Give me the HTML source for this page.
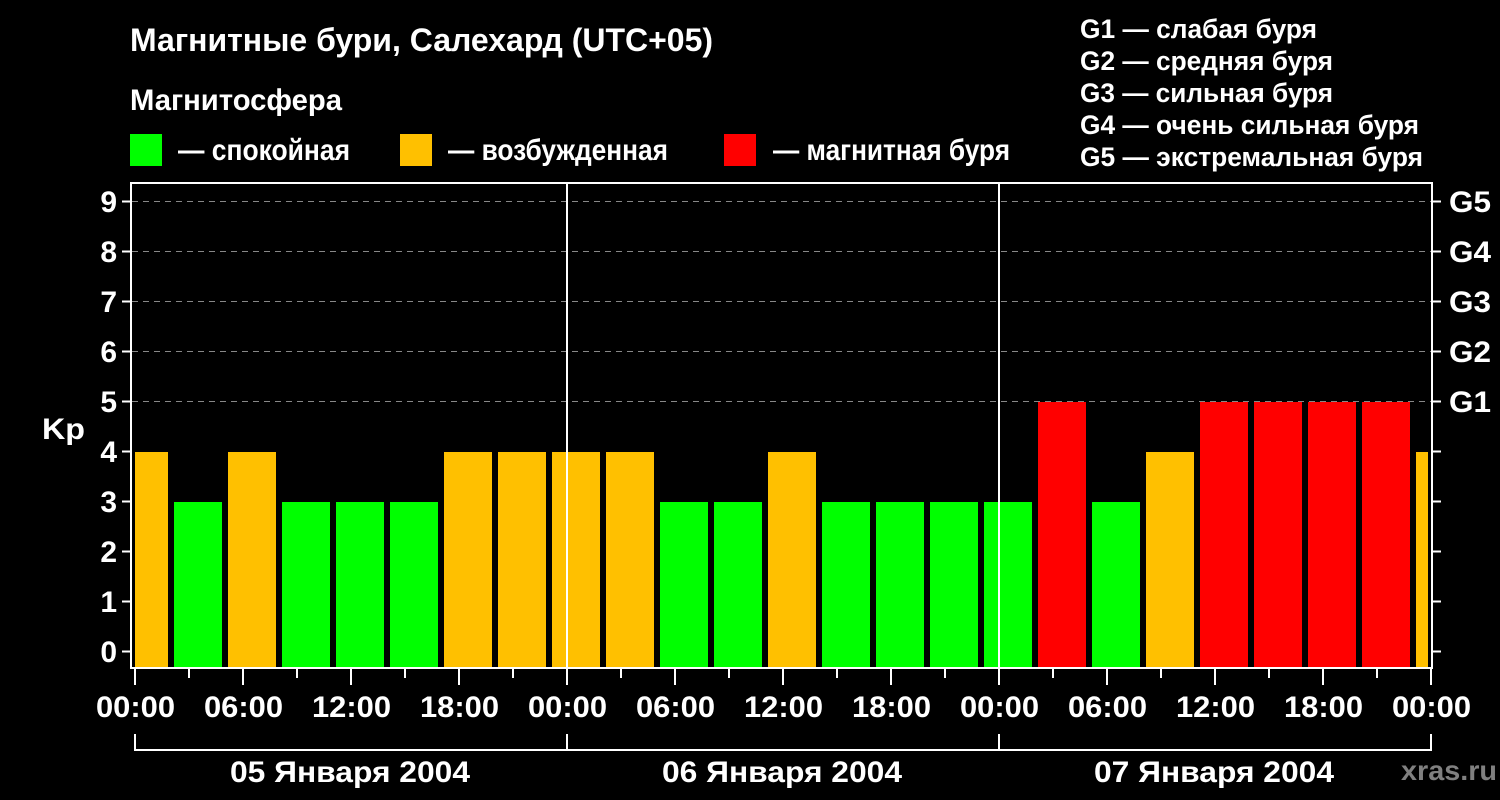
<!DOCTYPE html>
<html><head><meta charset="utf-8"><style>html,body{margin:0;padding:0;background:#000;}svg{display:block}</style></head>
<body>
<svg width="1500" height="800" xmlns="http://www.w3.org/2000/svg" font-family="'Liberation Sans', sans-serif" font-weight="bold" fill="#fff">
<rect width="1500" height="800" fill="#000"/>
<text x="130" y="51" font-size="32" textLength="583" lengthAdjust="spacingAndGlyphs">Магнитные бури, Салехард (UTC+05)</text>
<text x="130" y="110" font-size="30" textLength="212" lengthAdjust="spacingAndGlyphs">Магнитосфера</text>
<rect x="130" y="134" width="32" height="32" fill="#00ff00"/>
<text x="178" y="160" font-size="30" textLength="172" lengthAdjust="spacingAndGlyphs">— спокойная</text>
<rect x="400" y="134" width="32" height="32" fill="#ffc000"/>
<text x="448" y="160" font-size="30" textLength="220" lengthAdjust="spacingAndGlyphs">— возбужденная</text>
<rect x="724" y="134" width="32" height="32" fill="#ff0000"/>
<text x="773" y="160" font-size="30" textLength="237" lengthAdjust="spacingAndGlyphs">— магнитная буря</text>
<g font-size="27">
<text x="1080" y="38" textLength="237" lengthAdjust="spacingAndGlyphs">G1 — слабая буря</text>
<text x="1080" y="70" textLength="253" lengthAdjust="spacingAndGlyphs">G2 — средняя буря</text>
<text x="1080" y="102" textLength="253" lengthAdjust="spacingAndGlyphs">G3 — сильная буря</text>
<text x="1080" y="134" textLength="339" lengthAdjust="spacingAndGlyphs">G4 — очень сильная буря</text>
<text x="1080" y="166" textLength="343" lengthAdjust="spacingAndGlyphs">G5 — экстремальная буря</text>
</g>
<g stroke="#888" stroke-width="1" stroke-dasharray="6,5">
<line x1="132" y1="201.5" x2="1431" y2="201.5"/><line x1="132" y1="251.5" x2="1431" y2="251.5"/>
<line x1="132" y1="301.5" x2="1431" y2="301.5"/><line x1="132" y1="351.5" x2="1431" y2="351.5"/>
<line x1="132" y1="401.5" x2="1431" y2="401.5"/>
</g>
<g>
<rect x="135" y="452" width="33" height="216" fill="#ffc000"/>
<rect x="174" y="502" width="48" height="166" fill="#00ff00"/>
<rect x="228" y="452" width="48" height="216" fill="#ffc000"/>
<rect x="282" y="502" width="48" height="166" fill="#00ff00"/>
<rect x="336" y="502" width="48" height="166" fill="#00ff00"/>
<rect x="390" y="502" width="48" height="166" fill="#00ff00"/>
<rect x="444" y="452" width="48" height="216" fill="#ffc000"/>
<rect x="498" y="452" width="48" height="216" fill="#ffc000"/>
<rect x="552" y="452" width="48" height="216" fill="#ffc000"/>
<rect x="606" y="452" width="48" height="216" fill="#ffc000"/>
<rect x="660" y="502" width="48" height="166" fill="#00ff00"/>
<rect x="714" y="502" width="48" height="166" fill="#00ff00"/>
<rect x="768" y="452" width="48" height="216" fill="#ffc000"/>
<rect x="822" y="502" width="48" height="166" fill="#00ff00"/>
<rect x="876" y="502" width="48" height="166" fill="#00ff00"/>
<rect x="930" y="502" width="48" height="166" fill="#00ff00"/>
<rect x="984" y="502" width="48" height="166" fill="#00ff00"/>
<rect x="1038" y="402" width="48" height="266" fill="#ff0000"/>
<rect x="1092" y="502" width="48" height="166" fill="#00ff00"/>
<rect x="1146" y="452" width="48" height="216" fill="#ffc000"/>
<rect x="1200" y="402" width="48" height="266" fill="#ff0000"/>
<rect x="1254" y="402" width="48" height="266" fill="#ff0000"/>
<rect x="1308" y="402" width="48" height="266" fill="#ff0000"/>
<rect x="1362" y="402" width="48" height="266" fill="#ff0000"/>
<rect x="1416" y="452" width="12" height="216" fill="#ffc000"/>
</g>
<g stroke="#fff" stroke-width="2" fill="none">
<rect x="131" y="183" width="1301" height="485"/>
<line x1="567" y1="183" x2="567" y2="668"/><line x1="999" y1="183" x2="999" y2="668"/>
<path d="M122 201.5H131M122 251.5H131M122 301.5H131M122 351.5H131M122 401.5H131M122 451.5H131M122 501.5H131M122 551.5H131M122 601.5H131M122 651.5H131"/>
<path d="M1432 201.5H1441M1432 251.5H1441M1432 301.5H1441M1432 351.5H1441M1432 401.5H1441M1432 451.5H1441M1432 501.5H1441M1432 551.5H1441M1432 601.5H1441M1432 651.5H1441"/>
<path d="M135 668V685M243 668V685M351 668V685M459 668V685M567 668V685M675 668V685M783 668V685M891 668V685M999 668V685M1107 668V685M1215 668V685M1323 668V685M1431 668V685"/>
<path d="M189 668V678M297 668V678M405 668V678M513 668V678M621 668V678M729 668V678M837 668V678M945 668V678M1053 668V678M1161 668V678M1269 668V678M1377 668V678"/>
<path d="M135 734V750H1431V734M567 734V750M999 734V750"/>
</g>
<g font-size="30" text-anchor="end">
<text x="117" y="212">9</text><text x="117" y="262">8</text><text x="117" y="312">7</text><text x="117" y="362">6</text><text x="117" y="412">5</text><text x="117" y="462">4</text><text x="117" y="512">3</text><text x="117" y="562">2</text><text x="117" y="612">1</text><text x="117" y="662">0</text>
</g>
<text x="42" y="439" font-size="30" textLength="43" lengthAdjust="spacingAndGlyphs">Kp</text>
<g font-size="30">
<text x="1449" y="212" textLength="42" lengthAdjust="spacingAndGlyphs">G5</text><text x="1449" y="262" textLength="42" lengthAdjust="spacingAndGlyphs">G4</text><text x="1449" y="312" textLength="42" lengthAdjust="spacingAndGlyphs">G3</text><text x="1449" y="362" textLength="42" lengthAdjust="spacingAndGlyphs">G2</text><text x="1449" y="412" textLength="42" lengthAdjust="spacingAndGlyphs">G1</text>
</g>
<g font-size="30">
<text x="96" y="717" textLength="79" lengthAdjust="spacingAndGlyphs">00:00</text><text x="204" y="717" textLength="79" lengthAdjust="spacingAndGlyphs">06:00</text><text x="312" y="717" textLength="79" lengthAdjust="spacingAndGlyphs">12:00</text><text x="420" y="717" textLength="79" lengthAdjust="spacingAndGlyphs">18:00</text>
<text x="528" y="717" textLength="79" lengthAdjust="spacingAndGlyphs">00:00</text><text x="636" y="717" textLength="79" lengthAdjust="spacingAndGlyphs">06:00</text><text x="744" y="717" textLength="79" lengthAdjust="spacingAndGlyphs">12:00</text><text x="852" y="717" textLength="79" lengthAdjust="spacingAndGlyphs">18:00</text>
<text x="960" y="717" textLength="79" lengthAdjust="spacingAndGlyphs">00:00</text><text x="1068" y="717" textLength="79" lengthAdjust="spacingAndGlyphs">06:00</text><text x="1176" y="717" textLength="79" lengthAdjust="spacingAndGlyphs">12:00</text><text x="1284" y="717" textLength="79" lengthAdjust="spacingAndGlyphs">18:00</text>
<text x="1392" y="717" textLength="79" lengthAdjust="spacingAndGlyphs">00:00</text>
<text x="230" y="782" textLength="240" lengthAdjust="spacingAndGlyphs">05 Января 2004</text>
<text x="662" y="782" textLength="240" lengthAdjust="spacingAndGlyphs">06 Января 2004</text>
<text x="1094" y="782" textLength="240" lengthAdjust="spacingAndGlyphs">07 Января 2004</text>
</g>
<text x="1401" y="780" font-size="28" fill="#808080" textLength="96" lengthAdjust="spacingAndGlyphs">xras.ru</text>
</svg>
</body></html>
